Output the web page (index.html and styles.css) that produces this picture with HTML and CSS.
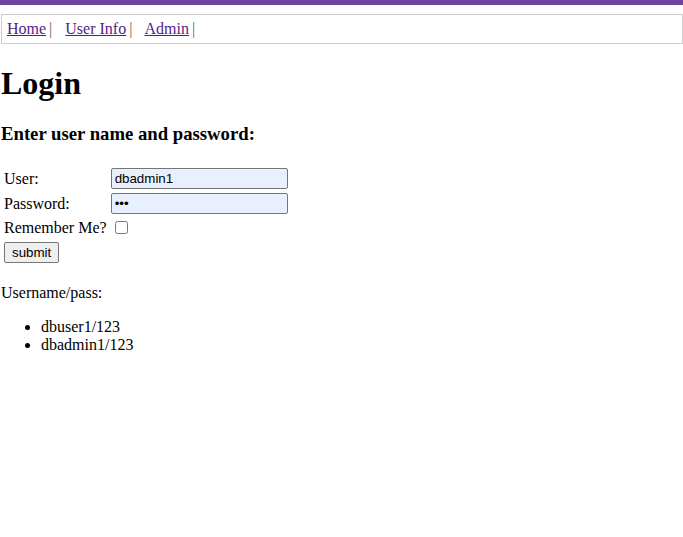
FILE: index.html
```html
<!DOCTYPE html>
<html>
<head>
<meta charset="utf-8">
<link rel="stylesheet" href="styles.css">
</head>
<body>
<div class="topbar"></div>
<div class="nav">
  <a href="#">Home</a><span class="sep">|</span>
  <a href="#">User Info</a><span class="sep">|</span>
  <a href="#">Admin</a><span class="sep">|</span>
</div>
<div class="content">
  <h1 class="title">Login</h1>
  <h3 class="subtitle">Enter user name and password:</h3>
  <table class="form">
    <tr><td class="label">User:</td><td><input class="field" type="text" value="dbadmin1"></td></tr>
    <tr><td class="label">Password:</td><td><input class="field" type="password" value="123"></td></tr>
    <tr><td class="label">Remember Me?</td><td><input class="check" type="checkbox"></td></tr>
    <tr><td colspan="2"><button class="submit" type="button">submit</button></td></tr>
  </table>
  <p class="hint">Username/pass:</p>
  <ul class="accounts">
    <li>dbuser1/123</li>
    <li>dbadmin1/123</li>
  </ul>
</div>
</body>
</html>
```
FILE: styles.css
```css
html, body {
  margin: 0;
  padding: 0;
  background: #fff;
  font-family: "Liberation Serif", "Times New Roman", serif;
  font-size: 16px;
  color: #000;
}
.topbar {
  height: 5px;
  background: #6f42a1;
}
.nav {
  margin: 9px 0 0 1px;
  border: 1px solid #cccccc;
  padding: 5px 5px;
  height: 18px;
  line-height: 18px;
  white-space: nowrap;
}
.nav a {
  color: #551a8b;
  text-decoration: underline;
}
.nav .sep {
  color: #666;
  margin-left: 3px;
  margin-right: 9px;
}
.content {
  padding: 0 1px;
}
.title {
  font-size: 32px;
  font-weight: bold;
  margin: 21px 0;
}
.subtitle {
  font-size: 18.72px;
  font-weight: bold;
  margin: 18px 0;
}
.form {
  border-spacing: 2px;
  margin-top: 20px;
}
.form td {
  padding: 1px;
}
.label {
  padding-right: 4px;
}
.field {
  width: 177px;
  height: 21px;
  box-sizing: border-box;
  border: 1px solid #767676;
  border-radius: 2px;
  background: #e8f0fe;
  font-family: "Liberation Sans", Arial, sans-serif;
  font-size: 13.33px;
  padding: 1px 3px;
  margin: 0;
}
.check {
  width: 13px;
  height: 13px;
  margin: 3px 3px 3px 4px;
}
.submit {
  font-family: "Liberation Sans", Arial, sans-serif;
  font-size: 13.33px;
  padding: 1px 7px;
  height: 21px;
  border: 1px solid #767676;
  border-radius: 2px;
  background: #efefef;
}
.hint {
  margin: 18px 0 16px;
}
.accounts {
  margin: 16px 0;
  padding-left: 40px;
}
```
